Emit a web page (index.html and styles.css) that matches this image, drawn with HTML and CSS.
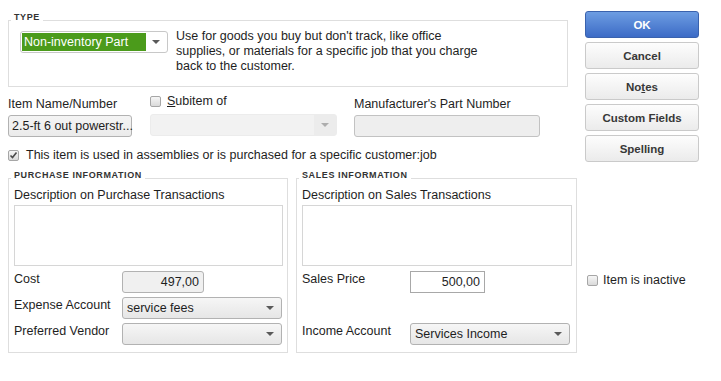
FILE: index.html
```html
<!DOCTYPE html>
<html lang="en">
<head>
    <meta charset="UTF-8">
    <title>New Item</title>
    <link rel="stylesheet" href="styles.css">
</head>
<body>
    <div class="dialog">
        <!-- Main form -->
        <div class="main">
            <div class="group type-group">
                <span class="group-title">TYPE</span>
                <div class="type-row">
                    <div class="combo combo-type">
                        <span class="combo-value">Non-inventory Part</span>
                        <span class="combo-arrow"></span>
                    </div>
                    <p class="type-help">Use for goods you buy but don't track, like office<br>supplies, or materials for a specific job that you charge<br>back to the customer.</p>
                </div>
            </div>

            <div class="item-row">
                <div class="field field-name">
                    <span class="field-label">Item Name/Number</span>
                    <div class="input input-name">2.5-ft 6 out powerstr...</div>
                </div>
                <div class="field field-sub">
                    <span class="check check-sub"><span class="box"></span><span><u>S</u>ubitem of</span></span>
                    <div class="combo combo-disabled">
                        <span class="combo-value"></span>
                        <span class="combo-arrow"></span>
                    </div>
                </div>
                <div class="field field-mfr">
                    <span class="field-label">Manufacturer's Part Number</span>
                    <div class="input input-disabled"></div>
                </div>
            </div>

            <span class="check check-assembly">
                <span class="box"><svg width="9" height="9" viewBox="0 0 9 9"><polyline points="1.5,4.5 3.5,6.5 7.5,1.5" fill="none" stroke="#4a4a4a" stroke-width="1.6"/></svg></span>
                <span>This item is used in assemblies or is purchased for a specific customer:job</span>
            </span>

            <div class="info-row">
                <div class="group info-group purchase">
                    <span class="group-title">PURCHASE INFORMATION</span>
                    <span class="field-label">Description on Purchase Transactions</span>
                    <div class="textarea"></div>
                    <div class="form-row">
                        <span class="row-label">Cost</span>
                        <div class="input input-cost">497,00</div>
                    </div>
                    <div class="form-row">
                        <span class="row-label">Expense Account</span>
                        <div class="combo combo-wide">
                            <span class="combo-value">service fees</span>
                            <span class="combo-arrow"></span>
                        </div>
                    </div>
                    <div class="form-row">
                        <span class="row-label">Preferred Vendor</span>
                        <div class="combo combo-wide">
                            <span class="combo-value"></span>
                            <span class="combo-arrow"></span>
                        </div>
                    </div>
                </div>

                <div class="group info-group sales">
                    <span class="group-title">SALES INFORMATION</span>
                    <span class="field-label">Description on Sales Transactions</span>
                    <div class="textarea"></div>
                    <div class="form-row">
                        <span class="row-label">Sales Price</span>
                        <div class="input input-price">500,00</div>
                    </div>
                    <div class="form-row form-row-empty"></div>
                    <div class="form-row">
                        <span class="row-label">Income Account</span>
                        <div class="combo combo-wide">
                            <span class="combo-value">Services Income</span>
                            <span class="combo-arrow"></span>
                        </div>
                    </div>
                </div>
            </div>
        </div>

        <!-- Buttons -->
        <div class="side">
            <button class="btn btn-primary">OK</button>
            <button class="btn">Cancel</button>
            <button class="btn">No<u>t</u>es</button>
            <button class="btn">Custom Fields</button>
            <button class="btn">Spellin<u>g</u></button>
            <span class="check check-inactive"><span class="box"></span><span>Item is inactive</span></span>
        </div>
    </div>
</body>
</html>
```

FILE: styles.css
```css
:root {
    --text: #1e1e1e;
    --group-border: #dedede;
    --field-border: #b2b2b2;
    --field-fill: #f0f0f0;
}

* {
    margin: 0;
    padding: 0;
    box-sizing: border-box;
}

body {
    font-family: 'Liberation Sans', Arial, sans-serif;
    font-size: 12.5px;
    line-height: 14px;
    color: var(--text);
    background: #ffffff;
}

.dialog {
    display: flex;
    gap: 8px;
    padding: 11px 0 0 8px;
}

/* Main column */
.main {
    width: 569px;
    padding-top: 9px;
    display: flex;
    flex-direction: column;
}

.group {
    position: relative;
    border: 1px solid var(--group-border);
}

.group-title {
    position: absolute;
    top: -9px;
    left: 2px;
    padding: 0 3px;
    background: #ffffff;
    font-size: 9px;
    line-height: 10px;
    font-weight: bold;
    letter-spacing: 0.6px;
    color: #333333;
}

.type-group {
    width: 560px;
    height: 67px;
    padding: 10px 11px;
}

.type-row {
    display: flex;
    gap: 8px;
}

.type-help {
    margin-top: -2px;
    line-height: 15px;
}

/* Combo boxes */
.combo {
    display: flex;
    align-items: center;
    height: 22px;
    border: 1px solid var(--field-border);
    border-radius: 3px;
    background: linear-gradient(#f6f6f6, #e6e6e6);
}

.combo-value {
    flex: 1;
    padding-left: 4px;
    white-space: nowrap;
    overflow: hidden;
}

.combo-arrow {
    width: 22px;
    height: 100%;
    position: relative;
}

.combo-arrow::after {
    content: '';
    position: absolute;
    left: 7px;
    top: 8px;
    border-left: 4px solid transparent;
    border-right: 4px solid transparent;
    border-top: 4px solid #5a5a5a;
}

.combo-type {
    width: 148px;
    padding: 1px;
    background: #ffffff;
    border-color: #c8c8c8;
}

.combo-type .combo-value {
    height: 100%;
    padding: 2px 2px 0;
    background: #4b9b1b;
    color: #ffffff;
    line-height: 15px;
}

.combo-type .combo-arrow {
    width: 20px;
}

.combo-type .combo-arrow::after {
    left: 6px;
    top: 7px;
}

.combo-disabled {
    width: 187px;
    border-color: #ececec;
    background: #f2f2f2;
}

.combo-disabled .combo-arrow {
    background: #ececec;
}

.combo-disabled .combo-arrow::after {
    border-top-color: #adadad;
}

.combo-wide {
    width: 160px;
}

/* Inputs */
.input {
    height: 22px;
    border: 1px solid var(--field-border);
    border-radius: 3px;
    background: var(--field-fill);
    padding: 3px 4px 0;
    white-space: nowrap;
}

.input-name {
    width: 124px;
    padding: 3px 3px 0;
    background: linear-gradient(#f4f4f4, #ebebeb);
}

.input-disabled {
    width: 186px;
    background: #eeeeee;
    border-color: #c2c2c2;
}

.input-cost {
    width: 82px;
    text-align: right;
}

.input-price {
    width: 75px;
    border-radius: 0;
    border-color: #a8a8a8;
    background: #ffffff;
    text-align: right;
}

/* Item row */
.item-row {
    display: flex;
    gap: 17px;
    margin-top: 10px;
}

.field {
    display: flex;
    flex-direction: column;
    gap: 4px;
}

.field-sub {
    margin-top: -3px;
    padding-left: 1px;
    gap: 6px;
}

/* Checkboxes */
.check {
    display: flex;
    align-items: center;
    gap: 6px;
}

.box {
    width: 11px;
    height: 11px;
    border: 1px solid #a6a6a6;
    border-radius: 2px;
    background: linear-gradient(#f6f6f6, #dadada);
    display: flex;
    align-items: center;
    justify-content: center;
}

.check-assembly {
    margin-top: 11px;
    gap: 7px;
}

/* Purchase / sales groups */
.info-row {
    display: flex;
    gap: 8px;
    margin-top: 16px;
}

.info-group {
    height: 175px;
    padding: 9px 4px 0 5px;
    display: flex;
    flex-direction: column;
}

.purchase {
    width: 280px;
}

.sales {
    width: 281px;
}

.textarea {
    height: 61px;
    margin-top: 3px;
    margin-bottom: 5px;
    border: 1px solid #d6d6d6;
    background: #ffffff;
}

.form-row {
    display: flex;
    height: 22px;
    margin-bottom: 4px;
}

.row-label {
    width: 108px;
    padding-top: 1px;
}

/* Side buttons */
.side {
    width: 114px;
    display: flex;
    flex-direction: column;
    gap: 4px;
}

.btn {
    height: 27px;
    border: 1px solid #cacaca;
    border-radius: 3px;
    background: linear-gradient(#fdfdfd, #ebebeb);
    font-family: 'Liberation Sans', Arial, sans-serif;
    font-size: 11.5px;
    font-weight: bold;
    color: #383838;
}

.btn-primary {
    border-color: #3a62ad;
    background: linear-gradient(#6d9de2, #3c6bc6);
    color: #ffffff;
}

.check-inactive {
    margin-top: 107px;
    padding-left: 2px;
    gap: 5px;
}
```
